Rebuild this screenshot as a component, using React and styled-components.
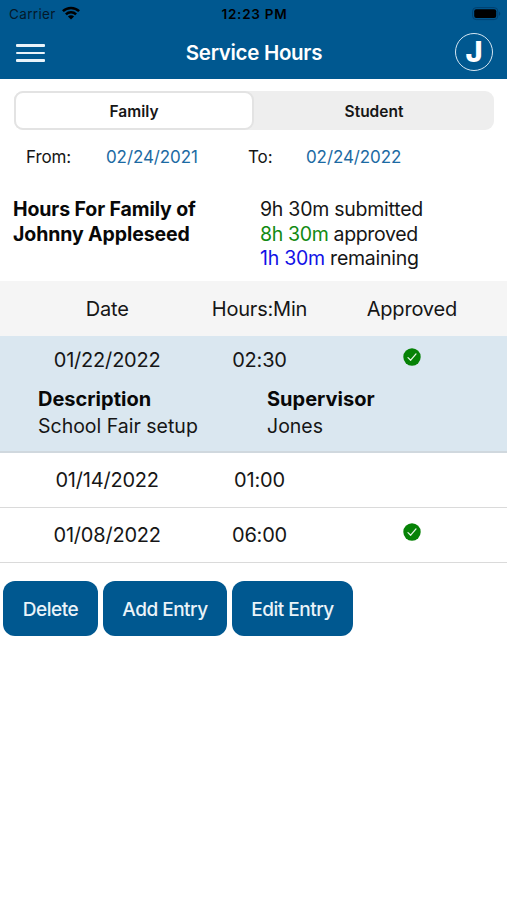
import React from "react";
import styled, { createGlobalStyle } from "styled-components";

const entries = [
  {
    date: "01/22/2022",
    hours: "02:30",
    approved: true,
    description: "School Fair setup",
    supervisor: "Jones",
  },
  { date: "01/14/2022", hours: "01:00", approved: false },
  { date: "01/08/2022", hours: "06:00", approved: true },
];

const ApprovedIcon = () => (
  <CheckSvg width="18" height="18" viewBox="0 0 18 18">
    <circle cx="9" cy="9" r="8.7" fill="#068206" />
    <path
      d="M5 9.6 L7.7 12.2 L13 5.9"
      fill="none"
      stroke="#e4f3e4"
      strokeWidth="1.3"
      strokeLinecap="round"
      strokeLinejoin="round"
    />
  </CheckSvg>
);

const WifiIcon = () => (
  <WifiSvg width="18" height="14" viewBox="0 0 18 14">
    <g fill="none" stroke="#000" strokeWidth="2.5">
      <path d="M0.9 5.2 A11.6 11.6 0 0 1 17.1 5.2" />
      <path d="M3.9 8.4 A7.2 7.2 0 0 1 14.1 8.4" />
    </g>
    <path d="M9 13.6 L5.9 10.5 A4.4 4.4 0 0 1 12.1 10.5 Z" fill="#000" />
  </WifiSvg>
);

const BatteryIcon = () => (
  <svg width="30" height="14" viewBox="0 0 30 14">
    <rect x="0.6" y="0.6" width="25.2" height="12" rx="3.6" fill="none" stroke="#00406f" strokeWidth="1" />
    <rect x="2.2" y="2.2" width="22" height="8.8" rx="2" fill="#000" />
    <path d="M27 4.4 C28.8 5.2 28.8 8 27 8.8 Z" fill="#00406f" />
  </svg>
);

const App = () => {
  return (
    <Screen>
      <GlobalStyle />
      <StatusBar>
        <Carrier>
          <span>Carrier</span>
          <WifiIcon />
        </Carrier>
        <Clock>12:23 PM</Clock>
        <Battery>
          <BatteryIcon />
        </Battery>
      </StatusBar>
      <Header>
        <MenuButton aria-label="Menu">
          <MenuLine />
          <MenuLine />
          <MenuLine />
        </MenuButton>
        <Title>Service Hours</Title>
        <Avatar>J</Avatar>
      </Header>

      <Segments>
        <Segment $active>Family</Segment>
        <Segment>Student</Segment>
      </Segments>

      <DateRange>
        <RangeLabel>From:</RangeLabel>
        <RangeDate>02/24/2021</RangeDate>
        <RangeLabel>To:</RangeLabel>
        <RangeDate>02/24/2022</RangeDate>
      </DateRange>

      <Summary>
        <FamilyName>
          Hours For Family of
          <br />
          Johnny Appleseed
        </FamilyName>
        <Totals>
          <Total>9h 30m submitted</Total>
          <Total $tight>
            <Amount $color="#128a12">8h 30m</Amount> approved
          </Total>
          <Total>
            <Amount $color="#1212e6">1h 30m</Amount> remaining
          </Total>
        </Totals>
      </Summary>

      <TableHead>
        <Cell>Date</Cell>
        <Cell>Hours:Min</Cell>
        <Cell>Approved</Cell>
      </TableHead>
      {entries.map((entry) => (
        <Entry key={entry.date} $selected={!!entry.description}>
          <EntryRow $selected={!!entry.description}>
            <Cell>{entry.date}</Cell>
            <Cell>{entry.hours}</Cell>
            <Cell>{entry.approved && <ApprovedIcon />}</Cell>
          </EntryRow>
          {entry.description && (
            <Details>
              <Detail>
                <DetailTitle>Description</DetailTitle>
                <DetailText>{entry.description}</DetailText>
              </Detail>
              <Detail>
                <DetailTitle>Supervisor</DetailTitle>
                <DetailText>{entry.supervisor}</DetailText>
              </Detail>
            </Details>
          )}
        </Entry>
      ))}

      <Actions>
        <ActionButton $width="95px">Delete</ActionButton>
        <ActionButton $width="124px">Add Entry</ActionButton>
        <ActionButton $width="121px">Edit Entry</ActionButton>
      </Actions>
    </Screen>
  );
};

const GlobalStyle = createGlobalStyle`
  * {
    box-sizing: border-box;
  }

  body {
    margin: 0;
    background-color: #fff;
    font-family: Inter, "Liberation Sans", sans-serif;
    color: #161616;
  }

  button {
    font-family: inherit;
    border: none;
    padding: 0;
  }
`;

const Screen = styled.div`
  width: 507px;
  height: 900px;
  overflow: hidden;
  background-color: #fff;
`;

const StatusBar = styled.div`
  display: grid;
  grid-template-columns: 1fr auto 1fr;
  align-items: center;
  height: 27px;
  padding: 0 5px 0 9px;
  background-color: #005890;
  color: #000;
`;

const Carrier = styled.div`
  display: flex;
  align-items: center;
  gap: 6px;
  font-size: 13.5px;
  letter-spacing: 0.35px;
  color: #04192a;
`;

const WifiSvg = styled.svg`
  margin-bottom: 2px;
`;

const Clock = styled.div`
  margin-right: 2px;
  font-size: 13.5px;
  font-weight: 600;
  letter-spacing: 0.75px;
`;

const Battery = styled.div`
  display: flex;
  justify-content: flex-end;
`;

const Header = styled.div`
  display: grid;
  grid-template-columns: 1fr auto 1fr;
  align-items: center;
  height: 52px;
  padding: 0 14px 2px 16px;
  background-color: #005890;
  color: #fff;
`;

const MenuButton = styled.button`
  display: flex;
  flex-direction: column;
  gap: 5px;
  width: 29px;
  margin-top: 2px;
  background: none;
`;

const MenuLine = styled.span`
  width: 29px;
  height: 2.4px;
  border-radius: 1px;
  background-color: #e9f3fa;
`;

const Title = styled.div`
  margin-right: 1px;
  font-size: 20.5px;
  font-weight: 600;
  letter-spacing: -0.3px;
`;

const Avatar = styled.div`
  display: flex;
  align-items: center;
  justify-content: center;
  justify-self: end;
  width: 38px;
  height: 38px;
  border: 1.5px solid #d5e6f2;
  border-radius: 50%;
  font-size: 29px;
  font-weight: 800;
  line-height: 34px;
`;

const Segments = styled.div`
  display: flex;
  height: 39px;
  margin: 12px 13px 0 14px;
  border-radius: 9px;
  background-color: #eee;
`;

const Segment = styled.button`
  width: ${({ $active }) => ($active ? "240px" : "240px")};
  padding-top: 1px;
  border: ${({ $active }) => ($active ? "2px solid #e3e3e3" : "none")};
  border-radius: 9px;
  background-color: ${({ $active }) => ($active ? "#fff" : "transparent")};
  font-size: 15.5px;
  font-weight: 600;
  color: #161616;
`;

const DateRange = styled.div`
  display: grid;
  grid-template-columns: 80px 142px 58px auto;
  align-items: center;
  height: 54px;
  padding: 0 0 0 26px;
`;

const RangeLabel = styled.div`
  font-size: 17px;
  letter-spacing: -0.1px;
`;

const RangeDate = styled.div`
  font-size: 17px;
  letter-spacing: -0.1px;
  color: #1c6aa3;
`;

const Summary = styled.div`
  display: grid;
  grid-template-columns: 247px auto;
  height: 97px;
  padding: 13px 0 0 13px;
  font-size: 19.5px;
  line-height: 24.5px;
`;

const FamilyName = styled.div`
  font-weight: 700;
  letter-spacing: -0.1px;
  color: #080808;
`;

const Totals = styled.div`
  color: #161616;
`;

const Total = styled.div`
  letter-spacing: ${({ $tight }) => ($tight ? "-0.35px" : "-0.25px")};
`;

const Amount = styled.span`
  color: ${({ $color }) => $color};
`;

const TableHead = styled.div`
  display: grid;
  grid-template-columns: repeat(3, 1fr);
  align-items: center;
  height: 55px;
  padding: 0 19px 0 31px;
  background-color: #f5f5f5;
`;

const Cell = styled.div`
  font-size: 20px;
  line-height: 24px;
  letter-spacing: -0.2px;
  text-align: center;
`;

const CheckSvg = styled.svg`
  display: block;
  margin: 0 auto 6px;
`;

const Entry = styled.div`
  height: ${({ $selected }) => ($selected ? "117px" : "55px")};
  border-bottom: ${({ $selected }) => ($selected ? "2px solid #d0d8de" : "1.5px solid #dadada")};
  background-color: ${({ $selected }) => ($selected ? "#dae7f0" : "#fff")};
`;

const EntryRow = styled.div`
  display: grid;
  grid-template-columns: repeat(3, 1fr);
  align-items: center;
  height: ${({ $selected }) => ($selected ? "48px" : "54px")};
  padding: 0 19px 0 31px;
`;

const Details = styled.div`
  display: grid;
  grid-template-columns: 229px auto;
  padding: 2px 0 0 38px;
`;

const Detail = styled.div`
  line-height: 27px;
`;

const DetailTitle = styled.div`
  font-size: 20px;
  font-weight: 700;
  color: #080808;
`;

const DetailText = styled.div`
  font-size: 19.5px;
`;

const Actions = styled.div`
  display: flex;
  gap: 5px;
  padding: 18px 3px;
`;

const ActionButton = styled.button`
  width: ${({ $width }) => $width};
  height: 55px;
  padding-top: 1px;
  border-radius: 12px;
  background-color: #005890;
  color: #eaf3f9;
  font-size: 19px;
  font-weight: 500;
  letter-spacing: -0.5px;
`;

export default App;
